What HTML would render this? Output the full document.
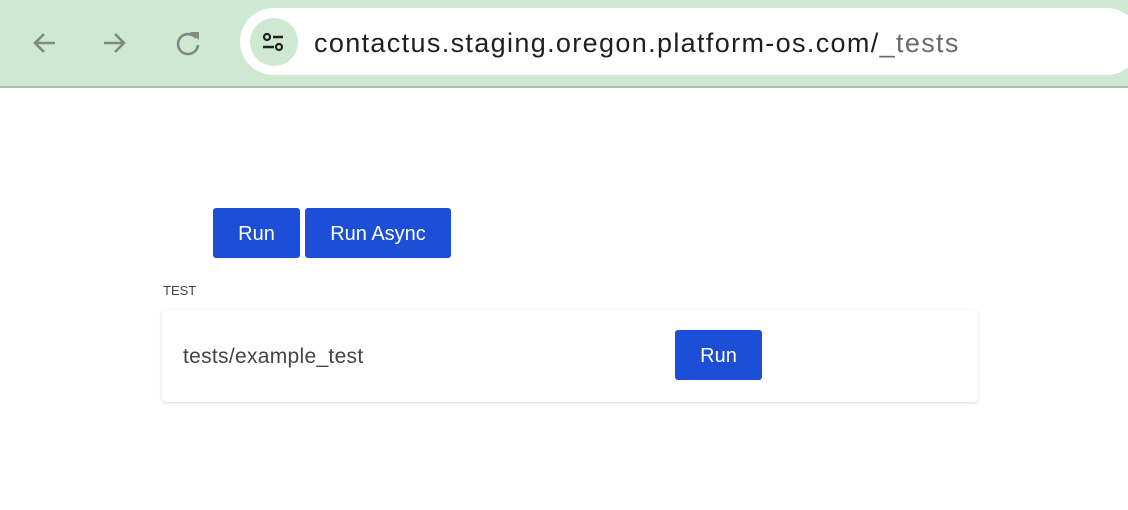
<!DOCTYPE html>
<html><head><style>
*{margin:0;padding:0;box-sizing:border-box}
body{width:1128px;height:510px;background:#fff;font-family:"Liberation Sans",sans-serif;position:relative;overflow:hidden}
.bar{position:absolute;left:0;top:0;width:1128px;height:88px;background:#cfe8d2;border-bottom:2px solid #a9bfab}
.addr{position:absolute;left:240px;top:8px;width:900px;height:67px;background:#fff;border-radius:34px}
.tune{position:absolute;left:250px;top:18px;width:48px;height:48px;border-radius:50%;background:#cfe8d2}
.url{position:absolute;left:314px;top:28px;font-size:27px;color:#1f1f1f;letter-spacing:1.35px}
.url span{color:#6b6b6b}
.btn{position:absolute;background:#1d4ed8;color:#fff;border-radius:3px;font-size:20px;display:flex;align-items:center;justify-content:center;height:50px;padding-top:3px}
.lbl{position:absolute;left:163px;top:283px;font-size:13px;color:#444}
.card{position:absolute;left:162px;top:310px;width:816px;height:92px;background:#fff;border-radius:4px;box-shadow:0 1px 3px rgba(0,0,0,.15)}
.name{position:absolute;left:183px;top:345px;font-size:21px;color:#444;letter-spacing:0.3px}
</style></head><body>
<div class="bar">
<svg style="position:absolute;left:30px;top:30px" width="30" height="26" viewBox="0 0 30 26"><path d="M25 13H5M14 4L5 13L14 22" stroke="#808a82" stroke-width="2.6" fill="none"/></svg>
<svg style="position:absolute;left:101px;top:30px" width="30" height="26" viewBox="0 0 30 26"><path d="M3 13H23M14 4L23 13L14 22" stroke="#808a82" stroke-width="2.6" fill="none"/></svg>
<svg style="position:absolute;left:174px;top:28px" width="30" height="30" viewBox="0 0 30 30"><path d="M22 10A10 10 0 1 0 24 17" stroke="#808a82" stroke-width="2.6" fill="none"/><path d="M16 4H25V12Z" fill="#808a82"/></svg>
<div class="addr"></div>
<div class="tune"><svg width="48" height="48" viewBox="0 0 48 48"><circle cx="17" cy="19" r="3" stroke="#222" stroke-width="2.2" fill="none"/><path d="M23 19H33M13 29H24" stroke="#222" stroke-width="2.4"/><circle cx="29" cy="29" r="3" stroke="#222" stroke-width="2.2" fill="none"/></svg></div>
<div class="url">contactus.staging.oregon.platform-os.com/<span>_tests</span></div>
</div>
<div class="btn" style="left:213px;top:208px;width:87px">Run</div>
<div class="btn" style="left:305px;top:208px;width:146px">Run Async</div>
<div class="lbl">TEST</div>
<div class="card"></div>
<div class="name">tests/example_test</div>
<div class="btn" style="left:675px;top:330px;width:87px">Run</div>
</body></html>
